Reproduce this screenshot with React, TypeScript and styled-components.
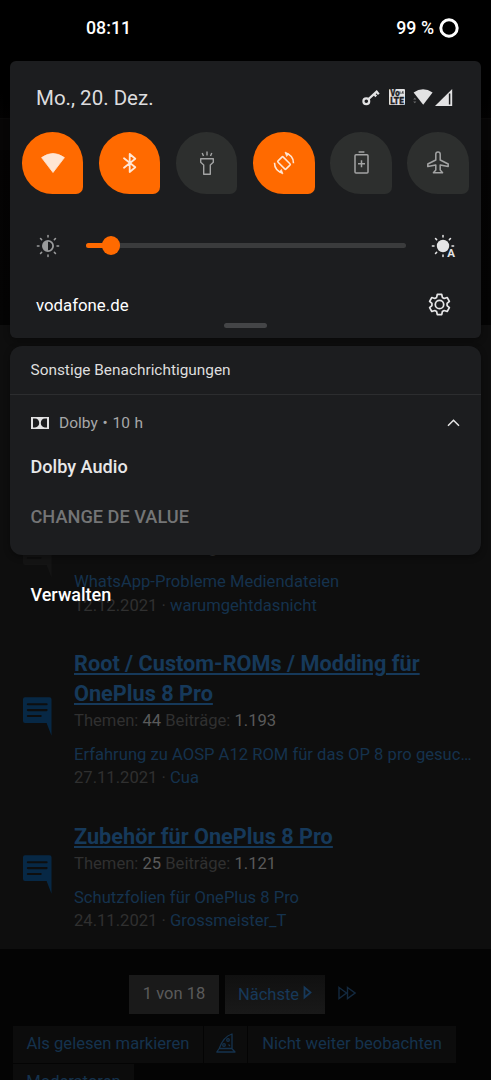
import React from "react";
import styled, { createGlobalStyle } from "styled-components";

const GlobalStyle = createGlobalStyle`
  html, body { margin: 0; padding: 0; background: #000; }
  * { box-sizing: border-box; }
  body { font-family: Roboto, "Liberation Sans", sans-serif; }
`;

const Screen = styled.div`
  position: relative;
  width: 491px;
  height: 1080px;
  overflow: hidden;
  background: #040404;
`;

/* ---------- dimmed forum page ---------- */

const Forum = styled.main`
  display: flex;
  flex-direction: column;
  height: 1080px;
`;

const ForumHead = styled.div`
  flex: none;
  height: 325px;
  padding-top: 118px;
  background: linear-gradient(#000 0, #000 90px, #040303 130px, #040404 100%);
`;

const ForumHeadBar = styled.div`
  height: 32px;
  border-top: 1px solid #0a0909;
  background: #070606;
`;

const ForumList = styled.section`
  flex: none;
  height: 623.5px;
  padding: 181px 18px 0 23px;
  display: flex;
  flex-direction: column;
  gap: 32px;
  background: #0e0e0e;
`;

const Entry = styled.article`
  display: flex;
  align-items: center;
  gap: 22.5px;
`;

const EntryIcon = styled.svg`
  flex: none;
  width: 28.5px;
  height: 39px;
  margin-bottom: 6px;
`;

const EntryBody = styled.div`
  flex: 1;
  min-width: 0;
  white-space: nowrap;
`;

const EntryTitle = styled.h3`
  margin: 0;
  font-size: 21.7px;
  line-height: 30px;
  font-weight: 700;
  color: #16395a;
  text-decoration: underline;
  text-decoration-thickness: 2px;
  text-underline-offset: 2px;
`;

const Stats = styled.div`
  font-size: 16.6px;
  line-height: 23px;
  margin-bottom: 11.3px;
  color: #303030;
`;

const Count = styled.span`
  color: #5a5a5a;
`;

const Latest = styled.div`
  font-size: 16.6px;
  line-height: 23.3px;
  color: #303030;
`;

const ForumLink = styled.span`
  color: #15324d;
`;

const Pager = styled.nav`
  display: flex;
  flex: none;
  align-items: center;
  gap: 6px;
  padding: 26px 0 0 129px;
`;

const PageBox = styled.div<{ $width: number; $link?: boolean }>`
  width: ${(p) => p.$width}px;
  height: 39px;
  display: flex;
  align-items: center;
  justify-content: center;
  gap: 4px;
  padding-bottom: ${(p) => (p.$link ? 0 : 2)}px;
  font-size: 16.5px;
  color: ${(p) => (p.$link ? "#17395a" : "#5a5a5a")};
  background: ${(p) => (p.$link ? "linear-gradient(#101010, #191919)" : "#1a1a1a")};
`;

const LastPage = styled.svg`
  width: 18px;
  height: 14px;
  margin: 0 0 3px 7px;
`;

const Actions = styled.div`
  flex: none;
  display: flex;
  gap: 1px;
  padding: 12px 0 0 13px;
`;

const Action = styled.div<{ $width: number }>`
  width: ${(p) => p.$width}px;
  height: 37.5px;
  display: flex;
  flex: none;
  align-items: center;
  justify-content: center;
  padding-bottom: 2px;
  font-size: 16.6px;
  color: #15324d;
  background: #0c0c0c;
`;

const SecondRow = styled(Actions)`
  padding-top: 1px;
`;

/* ---------- notification shade ---------- */

const Shade = styled.div`
  position: absolute;
  inset: 0;
  display: flex;
  flex-direction: column;
  color: #fff;
`;

const StatusBar = styled.header`
  height: 61px;
  flex: none;
  display: flex;
  justify-content: space-between;
  align-items: flex-start;
  padding: 17px 32px 0 86px;
  font-size: 17.8px;
  font-weight: 500;
  line-height: 21px;
`;

const Battery = styled.div`
  display: flex;
  align-items: center;
  gap: 5px;
`;

const Card = styled.section<{ $height: number; $radius: number }>`
  flex: none;
  height: ${(p) => p.$height}px;
  margin: 0 10px;
  border-radius: ${(p) => p.$radius}px;
  background: #1c1d1f;
  box-shadow: 0 2px 6px rgba(0, 0, 0, 0.35);
`;

const DateRow = styled.div`
  display: flex;
  justify-content: space-between;
  align-items: center;
  height: 71px;
  padding: 2px 28px 0 26px;
  font-size: 20.5px;
  color: #dcdcde;
`;

const StatusIcons = styled.div`
  display: flex;
  align-items: center;
  padding-bottom: 1px;
`;

const Tiles = styled.div`
  display: flex;
  gap: 15.8px;
  padding-left: 12px;
`;

const Tile = styled.div<{ $on?: boolean }>`
  width: 61.3px;
  height: 61.5px;
  display: flex;
  align-items: center;
  justify-content: center;
  border-radius: 50% 50% 7px 50%;
  color: ${(p) => (p.$on ? "#ffe6d4" : "#a3a4a4")};
  background: ${(p) => (p.$on ? "#ff6a00" : "#2d2f2e")};
`;

const Brightness = styled.div`
  display: flex;
  align-items: center;
  height: 24px;
  margin-top: 40px;
  padding: 0 26px 0 26px;
`;

const Track = styled.div`
  width: 320px;
  height: 5.5px;
  margin-left: 25.5px;
  margin-right: auto;
  border-radius: 3px;
  display: flex;
  align-items: center;
  background: #3a3b3c;
`;

const TrackFill = styled.div`
  width: 17px;
  height: 5.5px;
  border-radius: 3px 0 0 3px;
  background: #ff6a00;
`;

const Knob = styled.div`
  width: 18.5px;
  height: 18.5px;
  margin-left: -1px;
  border-radius: 50%;
  background: #ff6a00;
`;

const CarrierRow = styled.div`
  display: flex;
  align-items: center;
  justify-content: space-between;
  height: 24px;
  margin-top: 35px;
  padding: 0 30px 0 26px;
  font-size: 16.8px;
`;

const Handle = styled.div`
  width: 43px;
  height: 5.5px;
  margin: 6px auto 0;
  border-radius: 3px;
  background: #444547;
`;

const SectionHead = styled.div`
  height: 48.5px;
  line-height: 49px;
  padding-left: 20.5px;
  font-size: 15.4px;
  color: #dedede;
  border-bottom: 1.5px solid #2c2d2f;
`;

const NoteHead = styled.div`
  display: flex;
  align-items: center;
  height: 20px;
  margin-top: 18.5px;
  padding: 0 21px 0 20.5px;
  font-size: 15.5px;
  color: #a7a8a9;
`;

const NoteMeta = styled.span`
  margin-left: 10.5px;
  margin-right: auto;
  word-spacing: 0.9px;
`;

const NoteTitle = styled.div`
  margin: 21.5px 0 0 20.5px;
  font-size: 18.1px;
  line-height: 24px;
  font-weight: 500;
  color: #e8e8e8;
`;

const NoteAction = styled.div`
  margin: 26px 0 0 20.5px;
  font-size: 18.2px;
  line-height: 24px;
  font-weight: 500;
  color: #747576;
`;

const Manage = styled.div`
  margin: 28.5px 0 0 30.5px;
  font-size: 18px;
  line-height: 24px;
  font-weight: 500;
  color: #fff;
`;

const Icon = styled.svg`
  display: block;
  flex: none;
  overflow: visible;
`;

const CommentIcon = ({ color = "#072845" }: { color?: string }) => (
  <EntryIcon viewBox="0 0 29 39">
    <path d="M2 0H27a2 2 0 0 1 2 2V39L24 26H2a2 2 0 0 1-2-2V2A2 2 0 0 1 2 0Z" fill={color} />
    <path d="M5 7H24M5 13H24M5 19H18" stroke="#0e0e0e" strokeWidth="2.2" strokeLinecap="round" />
  </EntryIcon>
);

const RAYS = [0, 45, 90, 135, 180, 225, 270, 315];

const Rays = ({ skip }: { skip?: number }) => (
  <>
    {RAYS.filter((a) => a !== skip).map((a) => (
      <path key={a} d="M21 12H22.6" transform={`rotate(${a} 12 12)`} stroke="currentColor" strokeWidth="1.5" strokeLinecap="round" />
    ))}
  </>
);

const DimSun = () => (
  <Icon width="24" height="24" viewBox="0 0 24 24" color="#9a9b9c">
    <Rays />
    <circle cx="12" cy="12" r="5.1" fill="none" stroke="currentColor" strokeWidth="1.8" />
    <path d="M12 7a5 5 0 0 0 0 10Z" fill="currentColor" />
  </Icon>
);

const AutoSun = () => (
  <Icon width="24" height="24" viewBox="0 0 24 24" color="#e4e4e5">
    <Rays skip={45} />
    <circle cx="12" cy="12" r="6.2" fill="currentColor" />
    <text x="16.3" y="23.2" fontSize="11.5" fontWeight="700" fill="currentColor" stroke="#1c1d1f" strokeWidth="2" paintOrder="stroke">
      A
    </text>
  </Icon>
);

const WifiTile = () => (
  <Icon width="24" height="20" viewBox="0 0 24 20">
    <path d="M.6 4.6Q12-3.600 23.400 4.600L12 19.500Z" fill="currentColor" stroke="currentColor" strokeWidth=".8" strokeLinejoin="round" />
  </Icon>
);

const BluetoothTile = () => (
  <Icon width="14" height="20" viewBox="0 0 14 20" fill="none" stroke="currentColor" strokeWidth="1.8" strokeLinejoin="round" strokeLinecap="round">
    <path d="M1 5.3 12.3 14.3 6.7 19V1L12.3 5.7 1 14.7" />
  </Icon>
);

const TorchTile = () => (
  <Icon width="14" height="24" viewBox="0 0 14 24" fill="none" stroke="currentColor" strokeWidth="1.4" strokeLinejoin="round">
    <path d="M.7 7.8H13.3V11.3L10.3 14V23.2H3.7V14L.7 11.3Z" />
    <path d="M7 .5V4.5M2.2 2 3.5 5M11.8 2 10.5 5" />
  </Icon>
);

const RotateTile = () => (
  <Icon width="24" height="24" viewBox="0 0 24 24" fill="none" stroke="currentColor" strokeWidth="1.6" strokeLinejoin="round">
    <rect x="8.3" y="6.3" width="7.4" height="11.4" rx="1" transform="rotate(-45 12 12)" />
    <path d="M13.5 2.2C18.2 3 21.6 7 21.5 12.2M10.5 21.8C5.8 21 2.4 17 2.5 11.8" />
    <path d="M13 1 17 3 14.6 5.6ZM11 23 7 21 9.4 18.4Z" fill="currentColor" strokeWidth=".6" />
  </Icon>
);

const BatteryTile = () => (
  <Icon width="15" height="23" viewBox="0 0 15 23" fill="none" stroke="currentColor" strokeWidth="1.5">
    <rect x="1" y="3.8" width="13" height="18.2" rx="1" />
    <path d="M4.6 1H10.4M4 12.7H11M7.5 9.2V16.2" />
  </Icon>
);

const PlaneTile = () => (
  <Icon width="22" height="23" viewBox="0 0 22 23" fill="none" stroke="currentColor" strokeWidth="1.5" strokeLinejoin="round">
    <path d="M8.8 3.2a2.2 2.2 0 0 1 4.4 0V9L21.2 13V15.6L13.2 14V19L15.6 21.8H6.4L8.8 19V14L.8 15.6V13L8.8 9Z" />
  </Icon>
);

const KeyIcon = () => (
  <Icon width="18" height="17" viewBox="0 0 18 17" fill="none" stroke="#e2e2e3">
    <circle cx="4.3" cy="12.2" r="2.9" strokeWidth="2.2" />
    <path d="M6.6 10 15.5 1.8M12 5 14.2 7.4M14.6 2.8 16.8 5.2" strokeWidth="2.3" />
  </Icon>
);

const VolteIcon = () => (
  <Icon width="16" height="16" viewBox="0 0 16 16" style={{ marginLeft: 9.5 }}>
    <rect width="16" height="16" rx="1" fill="#e2e2e3" />
    <g fill="#1c1d1f" stroke="#1c1d1f" strokeWidth=".3" fontWeight="900">
      <text x="1.2" y="7.3" fontSize="8.4" textLength="9.4" lengthAdjust="spacingAndGlyphs">Vo</text>
      <text x="1.2" y="15" fontSize="8.8" textLength="13.6" lengthAdjust="spacingAndGlyphs">LTE</text>
    </g>
    <path d="M11 5V2.4M12.6 4.6 14 2.2M14 5V2.6" stroke="#1c1d1f" strokeWidth=".8" />
  </Icon>
);

const WifiStatus = () => (
  <Icon width="20" height="16" viewBox="0 0 20 16" style={{ marginLeft: 8 }}>
    <path d="M.6 3.6Q10-3.2 19.6 3.6L10.2 15.8Z" fill="#e2e2e3" />
    <path d="M.2 10.4 1.8 8.8 3.4 10.4ZM.2 12.6 1.8 14.2 3.4 12.6Z" fill="#6c6d6e" />
  </Icon>
);

const SignalStatus = () => (
  <Icon width="18" height="17" viewBox="0 0 18 17" style={{ marginLeft: 2 }}>
    <path d="M0 17 17.2 0V17Z" fill="#e2e2e3" />
    <path d="M14.6 4.5V15.5" stroke="#1c1d1f" strokeWidth="1.5" />
  </Icon>
);

const GearIcon = () => (
  <Icon width="23" height="23" viewBox="0 0 24 24" fill="none" stroke="#e6e6e7" strokeWidth="1.8" strokeLinejoin="round">
    <path d="M9.7 1.4h4.6l.7 3.2 1.9 1.1 3.1-1 2.3 4-2.4 2.2v2.2l2.4 2.2-2.3 4-3.1-1-1.9 1.1-.7 3.200H9.700L9 19.400l-1.900-1.100-3.100 1-2.300-4 2.400-2.200v-2.200L1.700 8.700l2.300-4 3.100 1L9 4.600Z" />
    <circle cx="12" cy="12" r="4.4" />
  </Icon>
);

const DolbyIcon = () => (
  <Icon width="18" height="12" viewBox="0 0 18 12">
    <rect width="18" height="12" fill="#e2e2e3" />
    <path d="M2 1.600H4C6.600 1.600 8.200 3.600 8.200 6S6.600 10.400 4 10.400H2ZM16 1.600H14C11.400 1.600 9.800 3.600 9.800 6S11.400 10.400 14 10.400H16Z" fill="#1c1d1f" />
  </Icon>
);

const PizzaIcon = () => (
  <Icon width="20" height="20" viewBox="0 0 20 20" fill="none" stroke="#15324d" strokeWidth="1.3" strokeLinejoin="round">
    <path d="M.8 19H19L16 15.8V1C9.5 3 5.5 9 3.2 15.5ZM3.2 15.5H16" />
    <circle cx="12" cy="7" r="1.3" />
    <circle cx="8" cy="12" r="1.3" />
    <path d="M12.5 11.5 14 13" />
  </Icon>
);

type EntryProps = {
  title: React.ReactNode;
  topics: string;
  posts: string;
  latest: string;
  date: string;
  user: string;
  iconColor?: string;
};

const ForumEntry = (p: EntryProps) => (
  <Entry>
    <CommentIcon color={p.iconColor} />
    <EntryBody>
      <EntryTitle>{p.title}</EntryTitle>
      <Stats>
        Themen: <Count>{p.topics}</Count> Beiträge: <Count>{p.posts}</Count>
      </Stats>
      <Latest><ForumLink>{p.latest}</ForumLink></Latest>
      <Latest>{p.date} · <ForumLink>{p.user}</ForumLink></Latest>
    </EntryBody>
  </Entry>
);

export default function App() {
  return (
    <Screen>
      <GlobalStyle />
      <Forum>
        <ForumHead><ForumHeadBar /></ForumHead>
        <ForumList>
          <ForumEntry title="OnePlus 8 Pro" topics="44" posts="1.193" latest="WhatsApp-Probleme Mediendateien" date="12.12.2021" user="warumgehtdasnicht" iconColor="#141414" />
          <ForumEntry title={<>Root / Custom-ROMs / Modding für<br />OnePlus 8 Pro</>} topics="44" posts="1.193" latest="Erfahrung zu AOSP A12 ROM für das OP 8 pro gesuc…" date="27.11.2021" user="Cua" />
          <ForumEntry title="Zubehör für OnePlus 8 Pro" topics="25" posts="1.121" latest="Schutzfolien für OnePlus 8 Pro" date="24.11.2021" user="Grossmeister_T" />
        </ForumList>
        <Pager>
          <PageBox $width={90}>1 von 18</PageBox>
          <PageBox $width={100} $link>
            Nächste
            <Icon width="9" height="13" viewBox="0 0 9 13" fill="none" stroke="#17395a" strokeWidth="1.8" style={{ marginBottom: 3 }}>
              <path d="M1.5 1.5 7.5 6.5 1.5 11.5Z" />
            </Icon>
          </PageBox>
          <LastPage viewBox="0 0 18 14" fill="none" stroke="#13293f" strokeWidth="1.4">
            <path d="M1 1.5 8.5 7 1 12.5ZM9.5 1.5 17 7 9.5 12.5Z" />
          </LastPage>
        </Pager>
        <Actions>
          <Action $width={190}>Als gelesen markieren</Action>
          <Action $width={43}><PizzaIcon /></Action>
          <Action $width={208}>Nicht weiter beobachten</Action>
        </Actions>
        <SecondRow>
          <Action $width={121}>Moderatoren</Action>
        </SecondRow>
      </Forum>

      <Shade>
        <StatusBar>
          <span>08:11</span>
          <Battery>
            99 %
            <Icon width="20" height="20" viewBox="0 0 20 20">
              <circle cx="10" cy="10" r="8.2" fill="none" stroke="#fff" strokeWidth="3" />
            </Icon>
          </Battery>
        </StatusBar>

        <Card $height={277} $radius={6}>
          <DateRow>
            Mo., 20. Dez.
            <StatusIcons>
              <KeyIcon />
              <VolteIcon />
              <WifiStatus />
              <SignalStatus />
            </StatusIcons>
          </DateRow>
          <Tiles>
            <Tile $on><WifiTile /></Tile>
            <Tile $on><BluetoothTile /></Tile>
            <Tile><TorchTile /></Tile>
            <Tile $on><RotateTile /></Tile>
            <Tile><BatteryTile /></Tile>
            <Tile><PlaneTile /></Tile>
          </Tiles>
          <Brightness>
            <DimSun />
            <Track><TrackFill /><Knob /></Track>
            <AutoSun />
          </Brightness>
          <CarrierRow>
            vodafone.de
            <GearIcon />
          </CarrierRow>
          <Handle />
        </Card>

        <Card $height={208.5} $radius={12} style={{ marginTop: 8 }}>
          <SectionHead>Sonstige Benachrichtigungen</SectionHead>
          <NoteHead>
            <DolbyIcon />
            <NoteMeta>Dolby • 10 h</NoteMeta>
            <Icon width="13" height="8" viewBox="0 0 13 8" fill="none" stroke="#e6e6e6" strokeWidth="1.5">
              <path d="M1 6.8 6.5 1.2 12 6.8" />
            </Icon>
          </NoteHead>
          <NoteTitle>Dolby Audio</NoteTitle>
          <NoteAction>CHANGE DE VALUE</NoteAction>
        </Card>
        <Manage>Verwalten</Manage>
      </Shade>
    </Screen>
  );
}
